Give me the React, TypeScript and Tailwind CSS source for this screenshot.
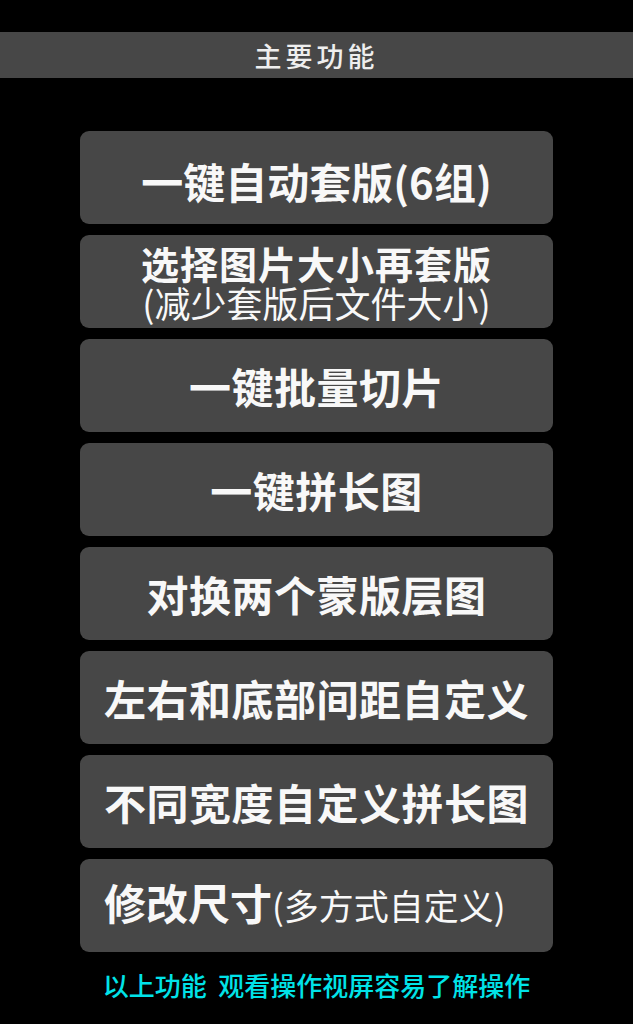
import React from "react";

const cjk = { fontFamily: '"Noto Sans CJK SC", "Noto Sans", sans-serif' };

function ActionButton({ children, className = "" }: { children: React.ReactNode; className?: string }) {
  return (
    <div
      className={`flex h-[93px] w-[473px] flex-col justify-center rounded-[9px] bg-[#474747] text-[#f8f8f8] ${className}`}
    >
      {children}
    </div>
  );
}

export default function App() {
  return (
    <div className="flex min-h-[1024px] w-full flex-col items-center bg-black" style={cjk}>
      {/* top bar */}
      <div className="mt-[32px] flex h-[46px] w-full items-center justify-center bg-[#474747]">
        <span className="text-[27px] font-medium leading-none tracking-[4px] text-[#eeeeee]">主要功能</span>
      </div>

      {/* actions */}
      <div className="mt-[53px] flex flex-col gap-[11px]">
        <ActionButton className="items-center pt-[6px]">
          <span className="text-[42px] font-bold leading-none">一键自动套版(6组)</span>
        </ActionButton>

        <ActionButton className="items-center">
          <span className="text-[38px] font-bold leading-[40px] tracking-[1px]">选择图片大小再套版</span>
          <span className="text-[36px] font-normal leading-[38px]">(减少套版后文件大小)</span>
        </ActionButton>

        <ActionButton className="items-center">
          <span className="text-[42px] font-bold leading-none tracking-[0.5px]">一键批量切片</span>
        </ActionButton>

        <ActionButton className="items-center">
          <span className="text-[42px] font-bold leading-none tracking-[0.5px]">一键拼长图</span>
        </ActionButton>

        <ActionButton className="items-center">
          <span className="text-[42px] font-bold leading-none tracking-[0.5px]">对换两个蒙版层图</span>
        </ActionButton>

        <ActionButton className="items-center">
          <span className="text-[42px] font-bold leading-none tracking-[0.5px]">左右和底部间距自定义</span>
        </ActionButton>

        <ActionButton className="items-center">
          <span className="text-[42px] font-bold leading-none tracking-[0.5px]">不同宽度自定义拼长图</span>
        </ActionButton>

        <ActionButton className="items-start pb-[8px] pl-[24px]">
          <div className="flex items-baseline">
            <span className="text-[42px] font-bold leading-none">修改尺寸</span>
            <span className="text-[35px] font-normal leading-none">(多方式自定义)</span>
          </div>
        </ActionButton>
      </div>

      <div className="mt-[20px] text-[26px] font-medium leading-none text-[#00e3e8]">
        以上功能&nbsp;&nbsp;观看操作视屏容易了解操作
      </div>
    </div>
  );
}
